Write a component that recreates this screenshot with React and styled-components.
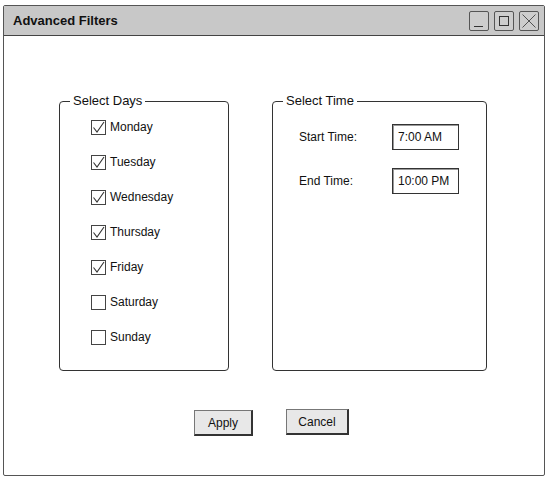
import React from 'react'
import styled, { createGlobalStyle } from 'styled-components'

const Global = createGlobalStyle`
  body {
    margin: 0;
    background: #fff;
    font-family: "Liberation Sans", Arial, sans-serif;
    color: #111;
  }
`

const Window = styled.div`
  box-sizing: border-box;
  margin: 5px 0 0 3px;
  width: 542px;
  height: 471px;
  border: 1px solid #555;
  border-radius: 2px;
  display: flex;
  flex-direction: column;
`

const TitleBar = styled.div`
  height: 29px;
  background: #c8c8c8;
  border-bottom: 1px solid #444;
  display: flex;
  align-items: center;
  padding: 0 5px 0 9px;
`

const Title = styled.div`
  flex: 1;
  font-weight: bold;
  font-size: 13px;
`

const Controls = styled.div`
  display: flex;
  gap: 5px;
`

const CtrlButton = styled.div`
  box-sizing: border-box;
  width: 20px;
  height: 20px;
  border: 1px solid #555;
  border-radius: 2px;
  background: #cdcdcd;
  display: flex;
  align-items: center;
  justify-content: center;
`

const Body = styled.div`
  flex: 1;
  padding: 58px 0 0 55px;
`

const Panels = styled.div`
  display: flex;
  gap: 43px;
`

const Group = styled.fieldset`
  box-sizing: border-box;
  margin: 0;
  padding: 0;
  width: ${p => p.$w}px;
  height: 277px;
  border: 1px solid #333;
  border-radius: 4px;
`

const Legend = styled.legend`
  margin-left: 10px;
  padding: 0 3px;
  font-size: 13px;
  line-height: 14px;
`

const DayList = styled.div`
  display: flex;
  flex-direction: column;
  gap: 21px;
  padding: 12px 0 0 31px;
`

const DayRow = styled.label`
  display: flex;
  align-items: center;
  gap: 4px;
  height: 14px;
  font-size: 12px;
`

const Box = styled.span`
  box-sizing: border-box;
  width: 15px;
  height: 15px;
  border: 1px solid #444;
  background: #fff;
  display: flex;
  align-items: center;
  justify-content: center;
`

const TimeList = styled.div`
  display: flex;
  flex-direction: column;
  gap: 19px;
  padding: 16px 0 0 26px;
`

const TimeRow = styled.div`
  display: flex;
  align-items: center;
  height: 25px;
  font-size: 12px;
`

const TimeLabel = styled.span`
  width: 93px;
`

const TimeInput = styled.div`
  box-sizing: border-box;
  width: 67px;
  height: 26px;
  border: 1px solid #333;
  box-shadow: inset 1px 1px 0 #999;
  padding-left: 5px;
  display: flex;
  align-items: center;
  font-size: 12px;
`

const Actions = styled.div`
  display: flex;
  gap: 33px;
  padding: 39px 0 0 135px;
  align-items: flex-start;
`

const Button = styled.div`
  box-sizing: border-box;
  width: ${p => p.$w}px;
  height: 26px;
  margin-top: ${p => p.$up ? -1 : 0}px;
  background: #e8e8e8;
  border: 1px solid #777;
  border-right: 2px solid #333;
  border-bottom: 2px solid #333;
  display: flex;
  align-items: center;
  justify-content: center;
  font-size: 12px;
`

const Check = () => (
  <svg width="13" height="13" viewBox="0 0 13 13">
    <path d="M1.5 6.5 L5 11 L12 1" fill="none" stroke="#333" strokeWidth="1.1" />
  </svg>
)

const days = [
  ['Monday', true], ['Tuesday', true], ['Wednesday', true], ['Thursday', true],
  ['Friday', true], ['Saturday', false], ['Sunday', false],
]

export default function App() {
  return (
    <>
      <Global />
      <Window>
        <TitleBar>
          <Title>Advanced Filters</Title>
          <Controls>
            <CtrlButton>
              <svg width="18" height="18" viewBox="0 0 18 18"><path d="M4 14.5 H13" stroke="#333" strokeWidth="1" /></svg>
            </CtrlButton>
            <CtrlButton>
              <svg width="18" height="18" viewBox="0 0 18 18"><rect x="4.5" y="4.5" width="9" height="9" fill="none" stroke="#333" strokeWidth="1" /></svg>
            </CtrlButton>
            <CtrlButton>
              <svg width="18" height="18" viewBox="0 0 18 18"><path d="M2.5 2.5 L15.5 15.5 M15.5 2.5 L2.5 15.5" stroke="#444" strokeWidth="0.9" /></svg>
            </CtrlButton>
          </Controls>
        </TitleBar>
        <Body>
          <Panels>
            <Group $w={170}>
              <Legend>Select Days</Legend>
              <DayList>
                {days.map(([d, on]) => (
                  <DayRow key={d}>
                    <Box>{on && <Check />}</Box>
                    {d}
                  </DayRow>
                ))}
              </DayList>
            </Group>
            <Group $w={215}>
              <Legend>Select Time</Legend>
              <TimeList>
                <TimeRow>
                  <TimeLabel>Start Time:</TimeLabel>
                  <TimeInput>7:00 AM</TimeInput>
                </TimeRow>
                <TimeRow>
                  <TimeLabel>End Time:</TimeLabel>
                  <TimeInput>10:00 PM</TimeInput>
                </TimeRow>
              </TimeList>
            </Group>
          </Panels>
          <Actions>
            <Button $w={59}>Apply</Button>
            <Button $w={63} $up>Cancel</Button>
          </Actions>
        </Body>
      </Window>
    </>
  )
}
